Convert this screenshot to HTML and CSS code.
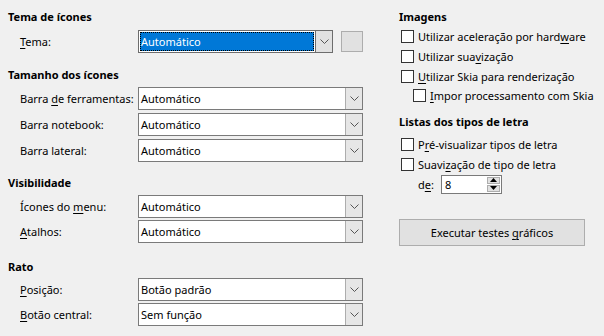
FILE: index.html
```html
<!DOCTYPE html>
<html lang="pt">
<head>
<meta charset="utf-8">
<link rel="stylesheet" href="styles.css">
</head>
<body>
<div class="page">
  <div class="col left">
    <section class="group g1">
      <h3>Tema de ícones</h3>
      <div class="row">
        <span class="lbl"><u>T</u>ema:</span>
        <div class="combo focus short"><span class="val"><span class="sel">Automático</span></span><span class="drop"><svg width="9" height="5" viewBox="0 0 9 5"><path d="M0.5 0.5 L4.5 4.5 L8.5 0.5" fill="none" stroke="#555" stroke-width="1"/></svg></span></div>
        <div class="sqbtn"></div>
      </div>
    </section>
    <section class="group g2">
      <h3>Tamanho dos ícones</h3>
      <div class="row">
        <span class="lbl">Barra <u>d</u>e ferramentas:</span>
        <div class="combo"><span class="val">Automático</span><span class="drop"><svg width="9" height="5" viewBox="0 0 9 5"><path d="M0.5 0.5 L4.5 4.5 L8.5 0.5" fill="none" stroke="#555" stroke-width="1"/></svg></span></div>
      </div>
      <div class="row">
        <span class="lbl">Barra notebook:</span>
        <div class="combo"><span class="val">Automático</span><span class="drop"><svg width="9" height="5" viewBox="0 0 9 5"><path d="M0.5 0.5 L4.5 4.5 L8.5 0.5" fill="none" stroke="#555" stroke-width="1"/></svg></span></div>
      </div>
      <div class="row">
        <span class="lbl">Barra lateral:</span>
        <div class="combo"><span class="val">Automático</span><span class="drop"><svg width="9" height="5" viewBox="0 0 9 5"><path d="M0.5 0.5 L4.5 4.5 L8.5 0.5" fill="none" stroke="#555" stroke-width="1"/></svg></span></div>
      </div>
    </section>
    <section class="group g3">
      <h3>Visibilidade</h3>
      <div class="row">
        <span class="lbl">Ícones do <u>m</u>enu:</span>
        <div class="combo"><span class="val">Automático</span><span class="drop"><svg width="9" height="5" viewBox="0 0 9 5"><path d="M0.5 0.5 L4.5 4.5 L8.5 0.5" fill="none" stroke="#555" stroke-width="1"/></svg></span></div>
      </div>
      <div class="row">
        <span class="lbl"><u>A</u>talhos:</span>
        <div class="combo"><span class="val">Automático</span><span class="drop"><svg width="9" height="5" viewBox="0 0 9 5"><path d="M0.5 0.5 L4.5 4.5 L8.5 0.5" fill="none" stroke="#555" stroke-width="1"/></svg></span></div>
      </div>
    </section>
    <section class="group g4">
      <h3>Rato</h3>
      <div class="row">
        <span class="lbl"><u>P</u>osição:</span>
        <div class="combo"><span class="val">Botão padrão</span><span class="drop"><svg width="9" height="5" viewBox="0 0 9 5"><path d="M0.5 0.5 L4.5 4.5 L8.5 0.5" fill="none" stroke="#555" stroke-width="1"/></svg></span></div>
      </div>
      <div class="row">
        <span class="lbl"><u>B</u>otão central:</span>
        <div class="combo"><span class="val">Sem função</span><span class="drop"><svg width="9" height="5" viewBox="0 0 9 5"><path d="M0.5 0.5 L4.5 4.5 L8.5 0.5" fill="none" stroke="#555" stroke-width="1"/></svg></span></div>
      </div>
    </section>
  </div>
  <div class="col right">
    <section class="group r1">
      <h3>Imagens</h3>
      <div class="chk"><span class="box"></span><span>Utilizar aceleração por hard<u>w</u>are</span></div>
      <div class="chk"><span class="box"></span><span>Utilizar sua<u>v</u>ização</span></div>
      <div class="chk"><span class="box"></span><span><u>U</u>tilizar Skia para renderização</span></div>
      <div class="chk sub"><span class="box"></span><span><u>I</u>mpor processamento com Skia</span></div>
    </section>
    <section class="group r2">
      <h3>Listas dos tipos de letra</h3>
      <div class="chk"><span class="box"></span><span>P<u>r</u>é-visualizar tipos de letra</span></div>
      <div class="chk"><span class="box"></span><span>Suavi<u>z</u>ação de tipo de letra</span></div>
      <div class="spinrow">
        <span class="slbl">d<u>e</u>:</span>
        <div class="spin">
          <span class="sval">8</span>
          <span class="sbtns">
            <span class="sb"><svg width="7" height="4" viewBox="0 0 7 4"><path d="M3.5 0 L7 4 L0 4 Z" fill="#000"/></svg></span>
            <span class="sb"><svg width="7" height="4" viewBox="0 0 7 4"><path d="M0 0 L7 0 L3.5 4 Z" fill="#000"/></svg></span>
          </span>
        </div>
      </div>
    </section>
    <div class="btn"><span>Executar testes <u>g</u>ráficos</span></div>
  </div>
</div>
</body>
</html>
```

FILE: styles.css
```css
* { box-sizing: border-box; }
html, body { margin: 0; padding: 0; }
body {
  background: #f0f0f0;
  font-family: "Noto Sans", "Open Sans", sans-serif;
  font-size: 11px;
  color: #000;
  width: 604px;
  height: 336px;
  overflow: hidden;
}
u { text-decoration-thickness: 1px; text-underline-offset: 2px; }
.page {
  display: flex;
  padding-top: 9px;
}
.col.left { width: 391px; padding-left: 8px; }
.col.right { padding-left: 8px; width: 213px; }
h3 {
  margin: 0;
  font-size: 11px;
  font-weight: 700;
  height: 16px;
  line-height: 16px;
  white-space: nowrap;
}
.group { display: flex; flex-direction: column; }
.row {
  display: flex;
  align-items: center;
  padding-left: 12px;
  height: 23px;
  margin-top: 3px;
}
.g1 .row { margin-top: 5px; }
.g2 { margin-top: 14px; }
.g2 .row:first-of-type { margin-top: 4px; }
.g3 { margin-top: 13px; }
.g3 .row:first-of-type { margin-top: 4px; }
.g3 .row { margin-top: 2px; }
.g4 { margin-top: 16px; }
.g4 .row:first-of-type { margin-top: 3px; }
.g4 .row { margin-top: 2px; }
.lbl { width: 118px; flex: none; white-space: nowrap; }
.combo {
  display: flex;
  width: 225px;
  height: 23px;
  border: 1px solid #7a7a7a;
  background: #fff;
}
.combo.short { width: 195px; }
.combo .val {
  flex: 1;
  padding-left: 2px;
  line-height: 21px;
  white-space: nowrap;
}
.combo .drop {
  width: 17px;
  flex: none;
  background: #e6e6e6;
  border-left: 1px solid #adadad;
  display: flex;
  align-items: center;
  justify-content: center;
}
.combo.focus { border-color: #6d6d6d; }
.combo.focus .val { padding: 1px; }
.combo.focus .sel {
  display: block;
  height: 100%;
  background: #0078d7;
  color: #fff;
  outline: 1px dotted #000;
  outline-offset: -1px;
  line-height: 19px;
  padding-left: 1px;
}
.combo.focus .drop { border-left: 1px solid #6d6d6d; background: #e1e1e1; }
.sqbtn {
  width: 22px;
  height: 21px;
  margin-left: 8px;
  background: #e1e1e1;
  border: 1px solid #adadad;
}
.chk {
  display: flex;
  align-items: center;
  height: 19.7px;
  padding-left: 2px;
  white-space: nowrap;
}
.r1 h3 { margin-bottom: 2px; }
.chk .box {
  width: 13px;
  height: 13px;
  border: 1px solid #333;
  background: #fff;
  margin-right: 4px;
  flex: none;
}
.chk.sub { padding-left: 14px; }
.r2 { margin-top: 8px; }
.r2 h3 { margin-bottom: 5px; }
.spinrow {
  display: flex;
  align-items: center;
  padding-left: 19px;
  margin-top: 0;
  height: 20px;
}
.slbl { width: 23px; }
.spin {
  display: flex;
  width: 61px;
  height: 19px;
  border: 1px solid #7a7a7a;
  background: #fff;
}
.sval { flex: 1; padding-left: 3px; line-height: 17px; }
.sbtns {
  width: 15px;
  display: flex;
  flex-direction: column;
  padding: 1px;
  gap: 1px;
}
.sb {
  flex: 1;
  background: #e1e1e1;
  border: 1px solid #adadad;
  display: flex;
  align-items: center;
  justify-content: center;
}
.btn {
  margin-top: 25px;
  width: 186px;
  height: 27px;
  background: #e1e1e1;
  border: 1px solid #adadad;
  display: flex;
  align-items: center;
  justify-content: center;
  white-space: nowrap;
}
```
